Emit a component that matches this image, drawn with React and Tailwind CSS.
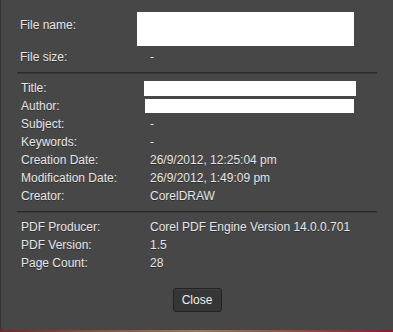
const rows2 = [
    { label: 'Title:', box: 'title' },
    { label: 'Author:', box: 'author' },
    { label: 'Subject:', value: '-' },
    { label: 'Keywords:', value: '-' },
    { label: 'Creation Date:', value: '26/9/2012, 12:25:04 pm' },
    { label: 'Modification Date:', value: '26/9/2012, 1:49:09 pm' },
    { label: 'Creator:', value: 'CorelDRAW' },
]

const rows3 = [
    { label: 'PDF Producer:', value: 'Corel PDF Engine Version 14.0.0.701' },
    { label: 'PDF Version:', value: '1.5' },
    { label: 'Page Count:', value: '28' },
]

function Separator({ className }) {
    return <div className={`mx-[16px] h-[2px] bg-[#2a2a2a] border-b border-[#3a3a3a] ${className}`} />
}

function Row({ label, children }) {
    return (
        <div className="flex items-center h-[18px] pl-[20px]">
            <div className="w-[129px] shrink-0">{label}</div>
            {children}
        </div>
    )
}

export default function App() {
    return (
        <div className="w-[393px] h-[332px] bg-gradient-to-r from-[#6b2a2a] via-[#9a7a5a] to-[#7a2230] overflow-hidden">
            <div
                className="h-[330px] bg-[#474747] border-l border-[#333] rounded-bl-[4px] text-[12px] leading-[16px] text-[#e6e6e6] [text-shadow:0_1px_0_rgba(0,0,0,0.35)]"
                style={{ fontFamily: '"Liberation Sans", Arial, sans-serif' }}
            >
                {/* File info */}
                <div className="pt-[12px] pl-[19px]">
                    <div className="flex items-start">
                        <div className="w-[117px] pt-[5px]">File name:</div>
                        <div className="w-[217px] h-[34px] bg-white" />
                    </div>
                    <div className="flex mt-[3px]">
                        <div className="w-[117px]">File size:</div>
                        <div className="pl-[13px]">-</div>
                    </div>
                </div>

                <Separator className="mt-[7px]" />

                {/* Document info */}
                <div className="pt-[5px]">
                    {rows2.map((r) => (
                        <Row key={r.label} label={r.label}>
                            {r.box === 'title' && <div className="ml-[-6px] w-[212px] h-[15px] bg-white" />}
                            {r.box === 'author' && <div className="ml-[-5px] w-[209px] h-[14px] bg-white" />}
                            {r.value && <div>{r.value}</div>}
                        </Row>
                    ))}
                </div>

                <Separator className="mt-[6px]" />

                {/* PDF info */}
                <div className="pt-[5px]">
                    {rows3.map((r) => (
                        <Row key={r.label} label={r.label}>
                            <div>{r.value}</div>
                        </Row>
                    ))}
                </div>

                <div className="flex justify-center mt-[16px]">
                    <button className="w-[49px] h-[24px] bg-[#363636] border border-[#222] rounded-[3px] text-[12px] text-[#eee] shadow-[inset_0_1px_0_rgba(255,255,255,0.06)]">
                        Close
                    </button>
                </div>
            </div>
        </div>
    )
}
